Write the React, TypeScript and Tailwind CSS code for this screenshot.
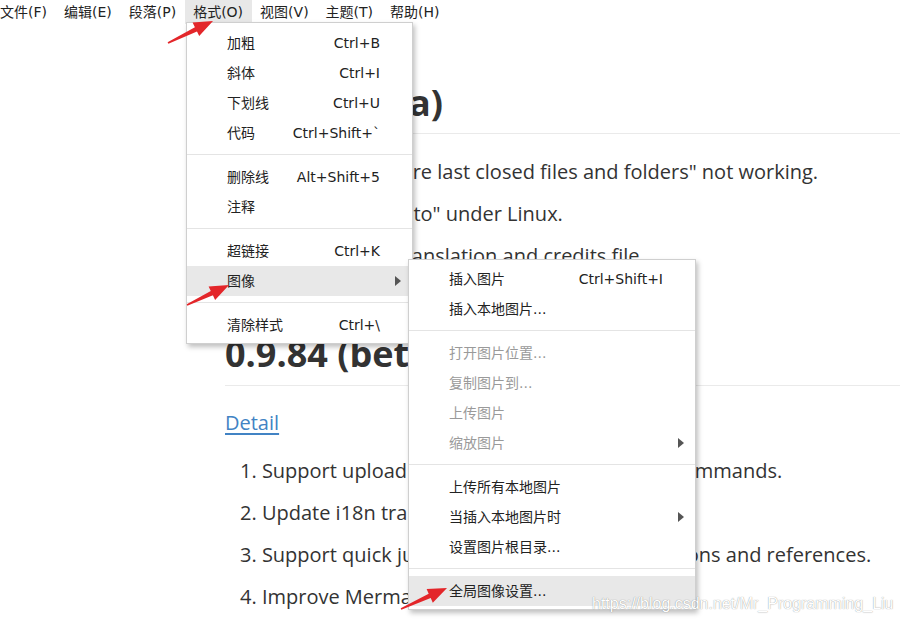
import React from "react";

type Item =
  | { sep: true }
  | { sep?: false; t: string; k?: string; sub?: boolean; dis?: boolean; active?: boolean };

const menu1: Item[] = [
  { t: "加粗", k: "Ctrl+B" },
  { t: "斜体", k: "Ctrl+I" },
  { t: "下划线", k: "Ctrl+U" },
  { t: "代码", k: "Ctrl+Shift+`" },
  { sep: true },
  { t: "删除线", k: "Alt+Shift+5" },
  { t: "注释" },
  { sep: true },
  { t: "超链接", k: "Ctrl+K" },
  { t: "图像", sub: true, active: true },
  { sep: true },
  { t: "清除样式", k: "Ctrl+\\" },
];

const menu2: Item[] = [
  { t: "插入图片", k: "Ctrl+Shift+I" },
  { t: "插入本地图片..." },
  { sep: true },
  { t: "打开图片位置...", dis: true },
  { t: "复制图片到...", dis: true },
  { t: "上传图片", dis: true },
  { t: "缩放图片", dis: true, sub: true },
  { sep: true },
  { t: "上传所有本地图片" },
  { t: "当插入本地图片时", sub: true },
  { t: "设置图片根目录..." },
  { sep: true },
  { t: "全局图像设置...", active: true },
];

const menuFont = { fontFamily: '"DejaVu Sans", "Noto Sans CJK SC", sans-serif' };

function Menu({ items, pl }: { items: Item[]; pl: string }) {
  return (
    <div className="flex flex-col">
      {items.map((it, i) =>
        it.sep ? (
          <div key={i} className="h-[14px] pt-[6px]">
            <div className="h-px bg-[#e4e4e4]" />
          </div>
        ) : (
          <div
            key={i}
            className={
              "relative flex h-[30px] items-center justify-between pr-[32px] text-[14px] " +
              pl +
              (it.active ? " bg-[#e8e8e8]" : "") +
              (it.dis ? " text-[#9a9a9a]" : " text-[#222]")
            }
          >
            <span>{it.t}</span>
            {it.k && <span>{it.k}</span>}
            {it.sub && (
              <span className="absolute right-[11px] top-[10px] h-0 w-0 border-y-[5px] border-l-[6px] border-y-transparent border-l-[#555]" />
            )}
          </div>
        )
      )}
    </div>
  );
}

function arrowPoints(x1: number, y1: number, x2: number, y2: number) {
  const dx = x2 - x1,
    dy = y2 - y1,
    len = Math.hypot(dx, dy);
  const ux = dx / len,
    uy = dy / len;
  const nx = -uy,
    ny = ux;
  const L = 19,
    W = 7.5,
    s0 = 0.8,
    s1 = 2.4;
  const bx = x2 - ux * L,
    by = y2 - uy * L;
  const pts = [
    [x1 + nx * s0, y1 + ny * s0],
    [bx + nx * s1, by + ny * s1],
    [bx + nx * W, by + ny * W],
    [x2, y2],
    [bx - nx * W, by - ny * W],
    [bx - nx * s1, by - ny * s1],
    [x1 - nx * s0, y1 - ny * s0],
  ];
  return pts.map((p) => p[0].toFixed(1) + "," + p[1].toFixed(1)).join(" ");
}

const arrows = [
  [168, 43, 213, 21],
  [187, 305, 229, 285],
  [401, 609, 447, 588],
];

const menubar = ["文件(F)", "编辑(E)", "段落(P)", "格式(O)", "视图(V)", "主题(T)", "帮助(H)"];

export default function App() {
  const docFont = { fontFamily: '"Open Sans", "Noto Sans CJK SC", sans-serif' };
  return (
    <div className="relative h-[621px] w-[900px] overflow-hidden bg-white">
      {/* menubar */}
      <div className="flex h-[24px] items-center text-[14px] text-[#222]" style={menuFont}>
        {menubar.map((m, i) => (
          <div
            key={m}
            className={
              "flex h-full items-center " +
              (i === 0 ? "pl-0 pr-[8.5px]" : "px-[8.5px]") +
              (m === "格式(O)" ? " bg-[#e8e8e8]" : "")
            }
          >
            {m}
          </div>
        ))}
      </div>

      {/* document */}
      <div className="pl-[225px] text-[#333]" style={docFont}>
        <h1 className="mt-[57px] border-b border-[#eaeaea] pb-[8px] text-[36px] font-bold leading-[44px]">
          0.9.85 (beta)
        </h1>
        <div className="mt-[23px] text-[20px]">
          <div className="mb-[12px] pl-[15px] leading-[30px]">1. Fix menu "Restore last closed files and folders" not working.</div>
          <div className="mb-[12px] pl-[15px] leading-[30px]">2. Fix "Reveal Files to" under Linux.</div>
          <div className="pl-[15px] leading-[30px]">3. Update zh-CN translation and credits file.</div>
        </div>
        <h2 className="mt-[61px] border-b border-[#eaeaea] pb-[9px] text-[36px] font-bold leading-[44px]">
          0.9.84 (beta)
        </h2>
        <div className="mt-[22px] text-[20px] leading-[30px]">
          <span className="text-[#4183c4] underline underline-offset-[3px]">Detail</span>
        </div>
        <div className="mt-[18px] text-[20px]">
          <div className="mb-[12px] pl-[15px] leading-[30px]">1. Support upload images via PicGo or custom commands.</div>
          <div className="mb-[12px] pl-[15px] leading-[30px]">2. Update i18n translation files.</div>
          <div className="mb-[12px] pl-[15px] leading-[30px]">3. Support quick jump between footnote definitions and references.</div>
          <div className="pl-[15px] leading-[30px]">4. Improve Mermaid support.</div>
        </div>
      </div>

      {/* format menu */}
      <div
        className="absolute left-[186px] top-[22px] w-[227px] border border-[#cfcfcf] bg-white pb-[3px] pt-[5px] shadow-[2px_3px_5px_rgba(0,0,0,0.25)]"
        style={menuFont}
      >
        <Menu items={menu1} pl="pl-[40px]" />
      </div>

      {/* image submenu */}
      <div
        className="absolute left-[408px] top-[259px] w-[288px] border border-[#cfcfcf] bg-white pb-[3px] pt-[4px] shadow-[2px_3px_5px_rgba(0,0,0,0.25)]"
        style={menuFont}
      >
        <Menu items={menu2} pl="pl-[40px]" />
      </div>

      {/* watermark */}
      <div
        className="absolute left-[592px] top-[592px] text-[16px] text-white [text-shadow:0_0_1px_rgba(0,0,0,0.5)]"
        style={{ fontFamily: '"Liberation Sans", Arial, sans-serif' }}
      >
        https://blog.csdn.net/Mr_Programming_Liu
      </div>

      {/* red annotation arrows */}
      <svg className="pointer-events-none absolute left-0 top-0" width="900" height="621">
        {arrows.map((a, i) => (
          <polygon key={i} points={arrowPoints(a[0], a[1], a[2], a[3])} fill="#e3262a" />
        ))}
      </svg>
    </div>
  );
}
